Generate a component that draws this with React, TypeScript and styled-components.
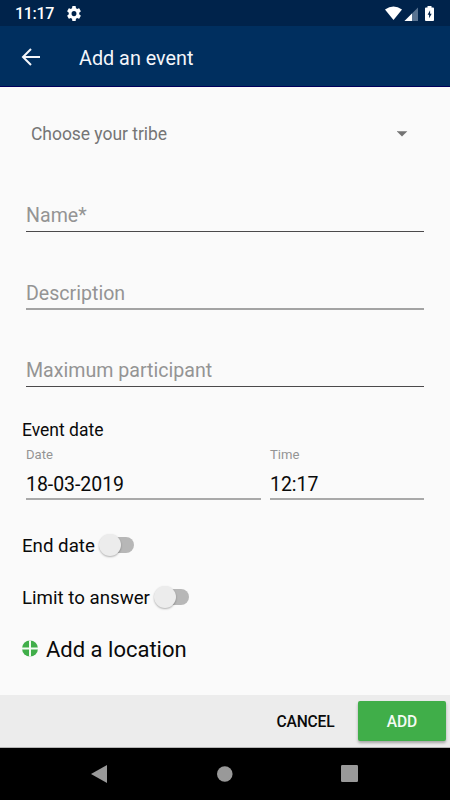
import React from "react";
import styled, { createGlobalStyle } from "styled-components";

const GlobalStyle = createGlobalStyle`
  * { box-sizing: border-box; }
  html, body { margin: 0; padding: 0; }
  body { font-family: Roboto, "Liberation Sans", sans-serif; background: #fafafa; }
`;

const Screen = styled.div`
  width: 450px;
  height: 800px;
  display: flex;
  flex-direction: column;
  background: #fafafa;
  overflow: hidden;
`;

const StatusBar = styled.header`
  height: 26px;
  flex: none;
  display: flex;
  align-items: center;
  padding: 1px 15px 0 15px;
  background: #00234b;
  color: #fff;
`;

const Clock = styled.span`
  width: 52px;
  font-size: 16px;
  font-weight: 500;
  letter-spacing: -0.3px;
  line-height: 24px;
  padding-top: 1px;
`;

const StatusIcons = styled.div`
  margin-left: auto;
  display: flex;
  align-items: center;
`;

const AppBar = styled.div`
  height: 61px;
  flex: none;
  display: flex;
  align-items: center;
  padding: 2px 0 0 21px;
  background: #002f5f;
  border-bottom: 1px solid #00005c;
`;

const Title = styled.h1`
  margin: 3px 0 0 38px;
  color: #f4f6fa;
  font-size: 19.8px;
  font-weight: 400;
  line-height: 26px;
`;

const Form = styled.main`
  flex: 1;
  display: flex;
  flex-direction: column;
  padding: 0 26px 0 22px;
`;

const Select = styled.div`
  height: 94px;
  display: flex;
  align-items: center;
  justify-content: space-between;
  padding: 0 16px 0 9px;
  color: #757575;
  font-size: 17.5px;
  letter-spacing: -0.04px;
`;

const Field = styled.div<{ $height: number; $soft?: boolean }>`
  height: ${(p) => p.$height}px;
  margin-left: 4px;
  display: flex;
  align-items: flex-end;
  padding-bottom: ${(p) => (p.$soft ? 2 : 3)}px;
  border-bottom: ${(p) => (p.$soft ? "2px solid #a3a3a3" : "1px solid #4b494b")};
  color: #949494;
  font-size: 19.6px;
  line-height: 24px;
`;

const SectionTitle = styled.h2`
  margin: 31px 0 0;
  font-size: 17.5px;
  font-weight: 400;
  line-height: 24px;
  color: #0a0a0a;
`;

const DateRow = styled.div`
  display: grid;
  grid-template-columns: 235px 154px;
  column-gap: 9px;
  margin: 4px 0 0 4px;
`;

const DateField = styled.div`
  height: 54px;
  padding-top: 1px;
  border-bottom: 2px solid #a9a9a9;
`;

const Caption = styled.div`
  color: #949494;
  font-size: 13.1px;
  line-height: 16px;
`;

const Value = styled.div`
  margin-top: 10px;
  color: #0a0a0a;
  font-size: 19.5px;
  letter-spacing: -0.05px;
  line-height: 24px;
`;

const SwitchRow = styled.div<{ $top: number }>`
  display: flex;
  align-items: center;
  gap: 4px;
  height: 26px;
  margin-top: ${(p) => p.$top}px;
  padding-top: 2px;
  color: #0a0a0a;
  font-size: 18.7px;
  line-height: 26px;
`;

const Track = styled.span`
  width: 34px;
  height: 16px;
  margin: -3px 0 0 1px;
  display: flex;
  align-items: center;
  border-radius: 8px;
  background: #b7b7b7;
`;

const Knob = styled.span`
  flex: none;
  width: 22px;
  height: 22px;
  margin-left: -1px;
  border-radius: 50%;
  background: #ececec;
  box-shadow: 0 1px 2px rgba(0, 0, 0, 0.3);
`;

const LocationRow = styled.div`
  display: flex;
  align-items: center;
  gap: 8px;
  margin-top: 25px;
  height: 28px;
  padding-top: 2px;
  color: #0a0a0a;
  font-size: 22px;
  line-height: 28px;

  svg {
    margin-bottom: 4px;
  }
`;

const Actions = styled.footer`
  height: 53px;
  flex: none;
  display: flex;
  align-items: center;
  justify-content: flex-end;
  padding: 0 4px 0 0;
  background: #ececec;
  border-bottom: 1px solid #b5b5b5;
`;

const Button = styled.button<{ $primary?: boolean }>`
  width: ${(p) => (p.$primary ? 88 : 105)}px;
  height: 40px;
  padding: 2px 0 0;
  border: 0;
  border-radius: 2px;
  font: 500 15.6px/20px Roboto, sans-serif;
  letter-spacing: -0.15px;
  color: ${(p) => (p.$primary ? "#f4fbf4" : "#0a0a0a")};
  background: ${(p) => (p.$primary ? "#40ae49" : "transparent")};
  box-shadow: ${(p) => (p.$primary ? "0 2px 3px rgba(0, 0, 0, 0.3)" : "none")};
`;

const NavBar = styled.nav`
  height: 52px;
  flex: none;
  display: flex;
  align-items: center;
  padding: 0 0 1px 91px;
  gap: 108px;
  background: #000;
`;

const GearIcon = () => (
  <svg width="14" height="15" viewBox="2 2 20 20" preserveAspectRatio="none">
    <path fill="#fff" d="M19.4 13a7.5 7.5 0 0 0 0-2l2.1-1.6a.5.5 0 0 0 .1-.7l-2-3.4a.5.5 0 0 0-.6-.2l-2.5 1a7.3 7.3 0 0 0-1.7-1l-.4-2.7a.5.5 0 0 0-.4-.4h-4a.5.5 0 0 0-.4.4l-.4 2.7a7.3 7.3 0 0 0-1.7 1l-2.5-1a.5.5 0 0 0-.6.2l-2 3.4a.5.5 0 0 0 .1.7L4.6 11a7.5 7.5 0 0 0 0 2l-2.1 1.6a.5.5 0 0 0-.1.7l2 3.4c.1.2.4.3.6.2l2.5-1a7.3 7.3 0 0 0 1.7 1l.4 2.7c0 .2.2.4.4.4h4c.2 0 .4-.2.4-.4l.4-2.7a7.3 7.3 0 0 0 1.7-1l2.5 1c.2.1.5 0 .6-.2l2-3.4a.5.5 0 0 0-.1-.7zM12 15.5a3.5 3.5 0 1 1 0-7 3.5 3.5 0 0 1 0 7z" />
  </svg>
);

const SignalIcons = () => (
  <svg width="50" height="16" viewBox="0 0 50 16">
    <path fill="#fff" d="M0 3.6Q8.5-2.8 17 3.6L8.5 14z" />
    <path fill="#597391" d="M33 1.5V15H19.5z" />
    <path fill="#fff" d="M27 7.5V15h-7.5z" />
    <path fill="#fff" d="M42.5 0h4v1.5h1.6q.9 0 .9.9v11.7q0 .9-.9.9h-7.2q-.9 0-.9-.9V2.4q0-.9.9-.9h1.6z" />
    <path fill="#00234b" d="M45.1 4.2l-2.5 4.5h1.5v3.6l2.6-4.6h-1.6z" />
  </svg>
);

const BackIcon = () => (
  <svg width="20" height="18" viewBox="0 0 20 18">
    <path d="M19 9H2M10 1L2 9l8 8" fill="none" stroke="#f4f6fa" strokeWidth="2" />
  </svg>
);

const Caret = () => (
  <svg width="11" height="6" viewBox="0 0 11 6">
    <path d="M-.3.2h10.6L5 5.5z" fill="#737373" />
  </svg>
);

const PlusIcon = () => (
  <svg width="16" height="17" viewBox="0 0 16 17">
    <circle cx="8" cy="8.5" r="8" fill="#40ae49" />
    <path d="M8 .5v16M0 8.5h16" stroke="#f3fbf3" strokeWidth="2" />
  </svg>
);

const Toggle = () => (
  <Track role="switch" aria-checked="false">
    <Knob />
  </Track>
);

export default function App() {
  return (
    <>
      <GlobalStyle />
      <Screen>
        <StatusBar>
          <Clock>11:17</Clock>
          <GearIcon />
          <StatusIcons>
            <SignalIcons />
          </StatusIcons>
        </StatusBar>
        <AppBar>
          <BackIcon />
          <Title>Add an event</Title>
        </AppBar>
        <Form>
          <Select>
            Choose your tribe
            <Caret />
          </Select>
          <Field $height={51}>Name*</Field>
          <Field $height={78} $soft>Description</Field>
          <Field $height={77}>Maximum participant</Field>
          <SectionTitle>Event date</SectionTitle>
          <DateRow>
            <DateField>
              <Caption>Date</Caption>
              <Value>18-03-2019</Value>
            </DateField>
            <DateField>
              <Caption>Time</Caption>
              <Value>12:17</Value>
            </DateField>
          </DateRow>
          <SwitchRow $top={32}>
            End date
            <Toggle />
          </SwitchRow>
          <SwitchRow $top={26}>
            Limit to answer
            <Toggle />
          </SwitchRow>
          <LocationRow>
            <PlusIcon />
            Add a location
          </LocationRow>
        </Form>
        <Actions>
          <Button>CANCEL</Button>
          <Button $primary>ADD</Button>
        </Actions>
        <NavBar>
          <svg width="16" height="18" viewBox="0 0 16 18">
            <path d="M0 9L16 0v18z" fill="#999" />
          </svg>
          <svg width="18" height="18" viewBox="0 0 18 18">
            <circle cx="9.8" cy="9" r="7.8" fill="#999" />
          </svg>
          <svg width="17" height="17" viewBox="0 0 17 17">
            <rect width="17" height="17" rx="1.2" fill="#999" />
          </svg>
        </NavBar>
      </Screen>
    </>
  );
}
